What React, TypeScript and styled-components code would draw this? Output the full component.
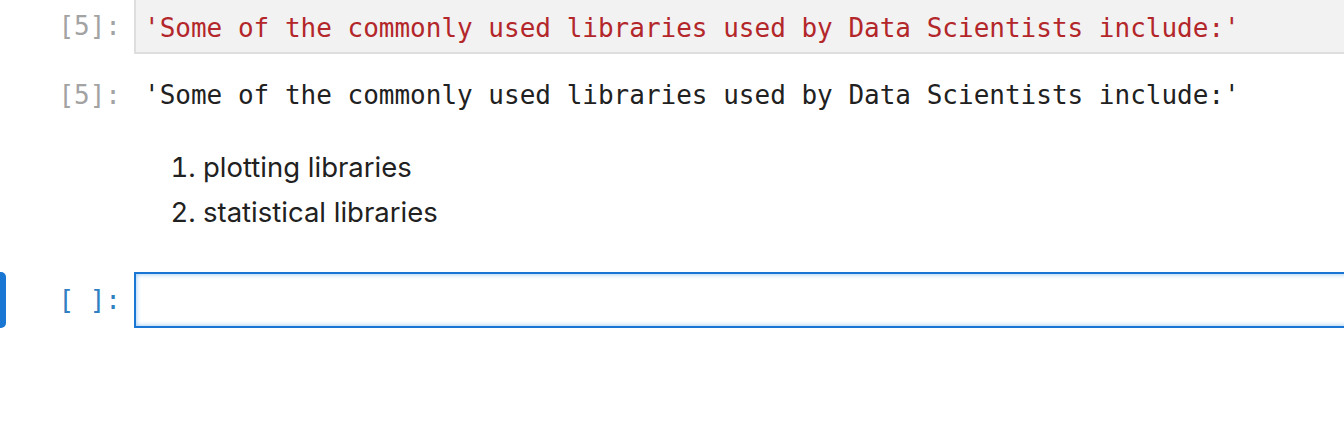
import React from "react";
import styled, { createGlobalStyle } from "styled-components";

const Global = createGlobalStyle`
  html, body {
    margin: 0;
    padding: 0;
    background: #ffffff;
    overflow: hidden;
  }
  body {
    font-family: "DejaVu Sans Mono", monospace;
  }
`;

const Notebook = styled.div`
  display: flex;
  flex-direction: column;
  margin-top: -2px;
  width: 100%;
`;

const Cell = styled.div<{ $gapTop?: number }>`
  display: flex;
  flex-direction: column;
  margin-top: ${(p) => p.$gapTop ?? 0}px;
`;

const Row = styled.div<{ $padTop?: number }>`
  display: flex;
  align-items: stretch;
  padding-top: ${(p) => p.$padTop ?? 0}px;
`;

const Collapser = styled.div<{ $active?: boolean }>`
  flex: 0 0 6px;
  border-radius: 0 5px 5px 0;
  background: ${(p) => (p.$active ? "#1976d2" : "transparent")};
`;

const Prompt = styled.div<{ $active?: boolean }>`
  flex: 0 0 128px;
  box-sizing: border-box;
  padding-right: 13px;
  display: flex;
  align-items: center;
  justify-content: flex-end;
  font-family: "DejaVu Sans Mono", monospace;
  font-size: 26px;
  line-height: 32px;
  color: ${(p) => (p.$active ? "#307fc1" : "#a3a3a3")};
  white-space: pre;
`;

const Editor = styled.div<{ $active?: boolean }>`
  flex: 1 1 auto;
  margin-right: -20px;
  box-sizing: border-box;
  height: 56px;
  padding: 12px 5px 8px 8px;
  border: 2px solid ${(p) => (p.$active ? "#1976d2" : "#dedede")};
  background: ${(p) => (p.$active ? "#ffffff" : "#f2f2f2")};
  box-shadow: ${(p) => (p.$active ? "inset 0 0 5px #90c2f5" : "none")};
  font-family: "DejaVu Sans Mono", monospace;
  font-size: 26px;
  line-height: 32px;
  white-space: pre;
`;

const StringToken = styled.span`
  color: #b3262a;
`;

const OutputText = styled.div`
  flex: 1 1 auto;
  padding-left: 10px;
  font-family: "DejaVu Sans Mono", monospace;
  font-size: 26px;
  line-height: 32px;
  color: #212121;
  white-space: pre;
`;

const Markdown = styled.div`
  flex: 1 1 auto;
  font-family: Inter, "Noto Sans", sans-serif;
  font-size: 27.5px;
  color: #212121;
`;

const List = styled.ol`
  margin: 0;
  padding-left: 69px;
`;

const Item = styled.li`
  line-height: 45px;
`;

const Spacer = styled.div`
  flex: 0 0 134px;
`;

export default function App() {
  const text = "'Some of the commonly used libraries used by Data Scientists include:'";
  return (
    <>
      <Global />
      <Notebook>
        <Cell>
          <Row>
            <Collapser />
            <Prompt>[5]:</Prompt>
            <Editor>
              <StringToken>{text}</StringToken>
            </Editor>
          </Row>
          <Row $padTop={25}>
            <Collapser />
            <Prompt>[5]:</Prompt>
            <OutputText>{text}</OutputText>
          </Row>
        </Cell>
        <Cell $gapTop={34}>
          <Row>
            <Spacer />
            <Markdown>
              <List>
                <Item>plotting libraries</Item>
                <Item>statistical libraries</Item>
              </List>
            </Markdown>
          </Row>
        </Cell>
        <Cell $gapTop={37}>
          <Row>
            <Collapser $active />
            <Prompt $active>[ ]:</Prompt>
            <Editor $active />
          </Row>
        </Cell>
      </Notebook>
    </>
  );
}
